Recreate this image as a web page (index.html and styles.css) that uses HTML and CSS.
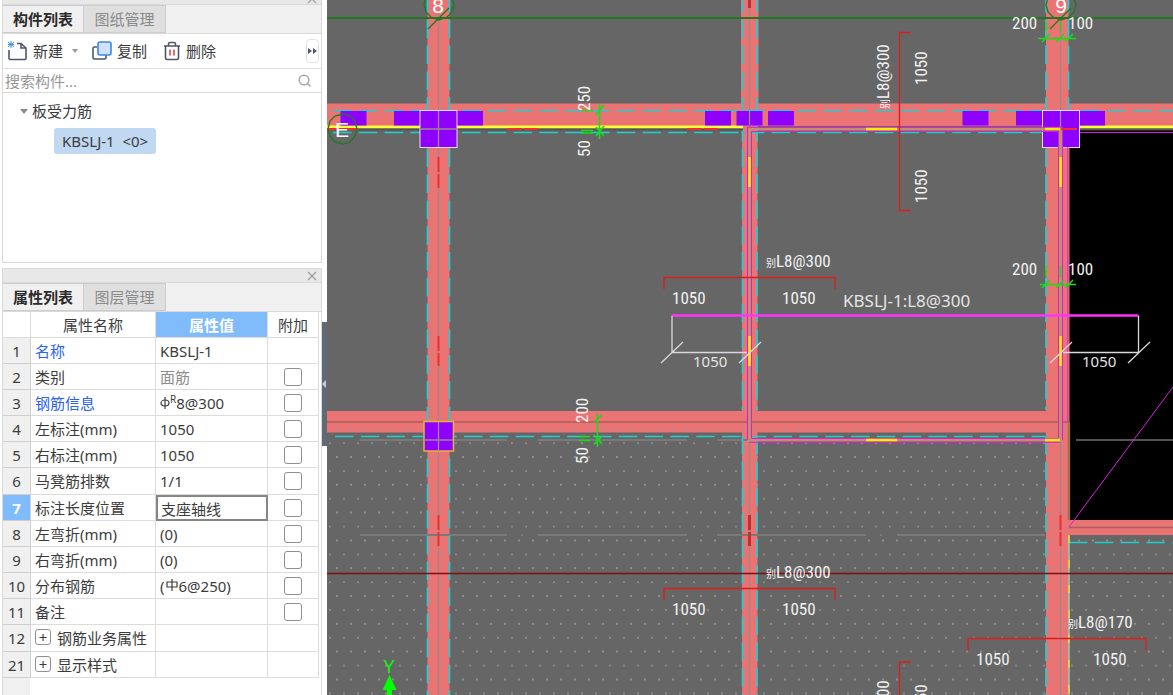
FILE: index.html
```html
<!DOCTYPE html>
<html lang="zh-CN">
<head>
    <meta charset="UTF-8">
    <meta name="viewport" content="width=device-width, initial-scale=1.0">
    <title>板受力筋</title>
    <link rel="stylesheet" href="styles.css">
</head>
<body>
    <div class="app">
        <aside class="sidebar">
            <section class="panel panel-list">
                <div class="panel-bar panel-bar-cut">
                    <button class="close" aria-label="关闭"><svg width="10" height="10" viewBox="0 0 10 10"><path d="M1 1l8 8M9 1l-8 8"/></svg></button>
                </div>
                <div class="tabs">
                    <button class="tab active">构件列表</button>
                    <button class="tab">图纸管理</button>
                </div>
                <div class="toolbar">
                    <button class="tool">
                        <svg width="20" height="20" viewBox="0 0 20 20">
                            <path class="ink" d="M1 9v8.500q0 1 1 1h15q1 0 1-1V7l-5-4.500H9M13 2.500V7h5"/>
                            <path class="blue" d="M0 1l6 5M6 1l-6 5M3 0v7M0 3.500h6"/>
                        </svg>
                        新建
                    </button>
                    <span class="caret"></span>
                    <button class="tool">
                        <svg width="20" height="20" viewBox="0 0 20 20">
                            <path class="ink" d="M5 6H2.500Q1 6 1 7.500v9Q1 18 2.500 18h10q1.500 0 1.500-1.500V14"/>
                            <rect class="sheet" x="6" y="1" width="13" height="13" rx="2"/>
                        </svg>
                        复制
                    </button>
                    <button class="tool">
                        <svg width="18" height="20" viewBox="0 0 18 20">
                            <path class="ink" d="M1 5h16M5.500 5V3q0-1.500 1.500-1.500h4q1.500 0 1.500 1.500v2M2.500 5v12q0 1.500 1.500 1.500h10q1.500 0 1.500-1.500V5"/>
                            <path class="red" d="M7 8.500v6M11 8.500v6"/>
                        </svg>
                        删除
                    </button>
                    <button class="more" aria-label="更多"><svg width="9" height="6" viewBox="0 0 9 6"><path d="M0 0l4 3-4 3zM5 0l4 3-4 3z"/></svg></button>
                </div>
                <label class="search">
                    <input type="text" placeholder="搜索构件..." aria-label="搜索构件">
                    <svg width="14" height="14" viewBox="0 0 14 14"><circle cx="6" cy="6" r="4.800"/><path d="M9.500 9.500l3 3"/></svg>
                </label>
                <div class="tree">
                    <div class="tree-node"><span class="caret caret-tree"></span>板受力筋</div>
                    <div class="tree-item">KBSLJ-1&nbsp; &lt;0&gt;</div>
                </div>
            </section>

            <section class="panel panel-props">
                <div class="panel-bar">
                    <button class="close" aria-label="关闭"><svg width="10" height="10" viewBox="0 0 10 10"><path d="M1 1l8 8M9 1l-8 8"/></svg></button>
                </div>
                <div class="tabs">
                    <button class="tab active">属性列表</button>
                    <button class="tab">图层管理</button>
                </div>
                <div class="table-wrap">
                    <table class="props">
                        <colgroup><col class="col-num"><col><col class="col-value"><col class="col-extra"></colgroup>
                        <thead>
                            <tr><th></th><th>属性名称</th><th class="current">属性值</th><th>附加</th></tr>
                        </thead>
                        <tbody>
                            <tr><th>1</th><td class="link">名称</td><td>KBSLJ-1</td><td></td></tr>
                            <tr><th>2</th><td>类别</td><td class="muted">面筋</td><td><input type="checkbox" aria-label="类别"></td></tr>
                            <tr><th>3</th><td class="link">钢筋信息</td><td><svg class="rebar" width="10" height="14" viewBox="0 0 10 14"><ellipse cx="5" cy="7" rx="4" ry="3"/><path d="M5 1v12"/></svg><sup>R</sup>8@300</td><td><input type="checkbox" aria-label="钢筋信息"></td></tr>
                            <tr><th>4</th><td>左标注(mm)</td><td>1050</td><td><input type="checkbox" aria-label="左标注"></td></tr>
                            <tr><th>5</th><td>右标注(mm)</td><td>1050</td><td><input type="checkbox" aria-label="右标注"></td></tr>
                            <tr><th>6</th><td>马凳筋排数</td><td>1/1</td><td><input type="checkbox" aria-label="马凳筋排数"></td></tr>
                            <tr><th class="current">7</th><td>标注长度位置</td><td class="editing"><input type="text" value="支座轴线" aria-label="标注长度位置"></td><td><input type="checkbox" aria-label="标注长度位置"></td></tr>
                            <tr><th>8</th><td>左弯折(mm)</td><td>(0)</td><td><input type="checkbox" aria-label="左弯折"></td></tr>
                            <tr><th>9</th><td>右弯折(mm)</td><td>(0)</td><td><input type="checkbox" aria-label="右弯折"></td></tr>
                            <tr><th>10</th><td>分布钢筋</td><td>(<svg class="rebar" width="14" height="14" viewBox="0 0 14 14"><path d="M2 3h10v5H2zM7 0v12"/></svg>6@250)</td><td><input type="checkbox" aria-label="分布钢筋"></td></tr>
                            <tr><th>11</th><td>备注</td><td></td><td><input type="checkbox" aria-label="备注"></td></tr>
                            <tr><th>12</th><td><button class="expand">+</button>钢筋业务属性</td><td></td><td></td></tr>
                            <tr><th>21</th><td><button class="expand">+</button>显示样式</td><td></td><td></td></tr>
                        </tbody>
                    </table>
                </div>
            </section>
        </aside>

        <div class="splitter"><button class="splitter-handle" aria-label="收起"></button></div>

        <main class="canvas">
            <svg class="drawing" viewBox="327 0 846 695" preserveAspectRatio="xMinYMin slice">
                <defs>
                    <pattern id="dots" x="329" y="456" width="14" height="27.800" patternUnits="userSpaceOnUse">
                        <path class="dot" d="M7 1h2M0 15h2"/>
                    </pattern>
                </defs>

                <!-- opening -->
                <rect x="1069" y="129" width="104" height="391"/>
                <path class="grey-dark" d="M1076 440H1173"/>

                <!-- beams -->
                <g class="beam">
                    <path d="M427.500 0h22v695h-22z"/>
                    <path d="M741 0h17.500v110h-1v585H742V110h-1z"/>
                    <path d="M1046 0h22.500v147h1v548H1046z"/>
                    <path d="M327 103.500h846V126H327z"/>
                    <path d="M327 411h742v21.500H327z"/>
                    <path d="M1069 520h104v15H1069z"/>
                </g>
                <path class="line-dark" d="M327 422h741.500V520M1069 527.500h104"/>
                <path fill="url(#dots)" d="M327 427h742v268H327zM1069 536h104v159H1069z"/>
                <path class="axis" d="M438.500 14V695M749.500 8V695M1060.500 14V695"/>
                <path class="grey" d="M360 535H507M521 535h2M538 535H687M701 535h2M717 535H866M880 535h2M897 535h148M360 440H507M538 440H687M717 440h30"/>

                <!-- hidden edges -->
                <g class="cyan">
                    <path d="M427.500 -6V695M449.500 -6V695M742.500 -6V410M757 -6V410M1046 -6V410M742.500 436V695M757 436V695M1046 436V695M1068.500 -6V110"/>
                    <path d="M333 110.500H1173M333 132.500H1046M335 436.500H1046M1069 542.500h104"/>
                </g>
                <path class="olive" d="M1069.500 422V520"/>
                <path class="cyan-mix" d="M1069 536V695"/>
                <path class="yellow-mix" d="M1069 535V695"/>

                <path class="green-dark" d="M327 18H1173"/>
                <path class="maroon" d="M327 573.500H1173"/>
                <path class="yellow" d="M327 127H743M1079 127h94"/>
                <path class="grey-dark" d="M327 129.500H743M1079 129.500h94"/>

                <!-- wall columns -->
                <g class="column">
                    <path d="M340.500 111h26v14.500h-26zM394 111h26v14.500h-26zM457 111h26v14.500h-26zM705 111h26v14.500h-26zM736.500 111h26v14.500h-26zM768 111h26v14.500h-26zM962.500 111h26v14.500h-26zM1016 111h26v14.500h-26zM1079 111h26v14.500h-26z"/>
                    <rect class="col-white" x="420" y="110.500" width="37" height="37"/>
                    <rect class="col-white" x="1042.500" y="110.500" width="37" height="37"/>
                    <rect class="col-gold" x="424" y="421.500" width="29.500" height="29.500"/>
                </g>
                <path class="axis" d="M420 129h37M438.500 111v36M424 440h29M438.500 422v29M749.500 111v14M1060.500 111v18"/>

                <!-- slab outline -->
                <path class="slab-fill" d="M749.500 129H1060.500V440H749.500z"/>
                <path class="slab-line" d="M747.500 440V127.300H1062.500V440M751.500 438.500V131.500H1058.500V438.500H751.500M749.500 442.300H1060"/>
                <path class="slab-line" d="M1067.800 147V422M1080 132.500h93"/>
                <path class="slab-line" d="M1069 527L1173 387"/>
                <path class="red-dash" d="M438.500 157v15M438.500 174v14M438.500 336v15M438.500 353v13M438.500 515v15M438.500 532v14M1060.500 515v15M1060.500 532v14M327 129h31M507 129h15M524 129h14M687 129h15M704 129h14M1061 129h16"/>
                <path class="red-deep" d="M749.500 0v8M749.500 515v15M749.500 532v14"/>
                <path class="yellow-dash" d="M749.500 157v30M749.500 336v30M1060.500 157v30M1060.500 336v30M866 129h31M1045 129h15M866 440h31M1045 440h15"/>

                <!-- rebar -->
                <path class="rebar-main" d="M671.500 315.500H1138.500"/>
                <path class="leader" d="M672 316V352.500H747M661 363l22-21M739 363l22-21M1138.500 316V352.500H1063M1128 363l22-21M1050 363l22-21"/>
                <path class="red-dim" d="M664 289V277.500H835V289M664 600V588.500H835V600M968 650V638.500H1146V650M911 32.500H899.500V210.500H911M911 662H899.500V695"/>

                <!-- green dimensions -->
                <path class="green-dim" d="M599.500 104v35M596 115l8-10M596 136l8-10M596 127l8 9M581 110.500h12M581 130.500h12M581 133h12M597.500 414v33M594 422l8-7M594 444l8-8M594 435l8 9M579 436.500h11M579 440.500h11"/>
                <path class="green-dim" d="M1038 38.500h38M1042 42l8-8M1056 42l8-8M1065 42l8-8M1040 284.500h36M1042 288l8-8M1056 288l8-8M1065 288l8-8M1060.500 22v9M1046 22v9M1060.500 266v11M1046 266v11"/>

                <!-- axis heads -->
                <g class="bubble">
                    <path d="M424 5l2-8 6-6 7-2 8 2 5 6 2 8-2 7-5 5-8 3-8-3-5-5zM428 29l21-21"/>
                    <path d="M1046 5l2-8 6-6 7-2 8 2 5 6 2 8-2 7-5 5-8 3-8-3-5-5zM1050 29l21-21"/>
                    <path d="M328 129l2-8 5-5 8-2 7 2 5 5 2 8-2 7-5 6-7 2-8-2-5-6z"/>
                </g>
                <g class="bubble-text">
                    <text x="438" y="13">8</text>
                    <text x="1061" y="13">9</text>
                    <text x="342" y="137">E</text>
                </g>

                <g class="cad">
                    <text x="766" y="267"><tspan class="mark">别</tspan>L8@300</text>
                    <text x="672" y="304">1050</text>
                    <text x="782" y="304">1050</text>
                    <text x="766" y="578"><tspan class="mark">别</tspan>L8@300</text>
                    <text x="672" y="615">1050</text>
                    <text x="782" y="615">1050</text>
                    <text x="1068" y="628"><tspan class="mark">别</tspan>L8@170</text>
                    <text x="976" y="665">1050</text>
                    <text x="1093" y="665">1050</text>
                    <text x="1012" y="29">200</text>
                    <text x="1068" y="29">100</text>
                    <text x="1012" y="275">200</text>
                    <text x="1068" y="275">100</text>
                    <text transform="translate(590 111) rotate(-90)">250</text>
                    <text transform="translate(590 157) rotate(-90)">50</text>
                    <text transform="translate(588 423) rotate(-90)">200</text>
                    <text transform="translate(588 464) rotate(-90)">50</text>
                    <text transform="translate(889 109) rotate(-90)"><tspan class="mark">别</tspan>L8@300</text>
                    <text transform="translate(927 85) rotate(-90)">1050</text>
                    <text transform="translate(927 203) rotate(-90)">1050</text>
                    <text transform="translate(889 745) rotate(-90)"><tspan class="mark">别</tspan>L8@300</text>
                    <text transform="translate(927 718) rotate(-90)">1050</text>
                </g>
                <g class="note">
                    <text x="843" y="307">KBSLJ-1:L8@300</text>
                    <text class="note-dim" x="693" y="367">1050</text>
                    <text class="note-dim" x="1082" y="367">1050</text>
                </g>

                <g class="ucs">
                    <text x="389" y="673">Y</text>
                    <path d="M389.500 675l7 15h-4.500v5h-5v-5h-4.500z"/>
                </g>
            </svg>
        </main>
    </div>
</body>
</html>
```

FILE: styles.css
```css
* {
    box-sizing: border-box;
}
body {
    margin: 0;
    font-family: "Noto Sans", "Noto Sans CJK SC", sans-serif;
    font-size: 15px;
    line-height: 20px;
    color: #3c3c3c;
    background-color: #fff;
}
button, input {
    font: inherit;
    color: inherit;
    background: none;
    border: 0;
    padding: 0;
    margin: 0;
}
svg {
    flex: none;
}
.app {
    display: flex;
    height: 100vh;
    overflow: hidden;
}

/* sidebar */
.sidebar {
    width: 322px;
    flex: none;
    padding-left: 2px;
    display: flex;
    flex-direction: column;
    gap: 5px;
}
.panel {
    border: 1px solid #d9d9d9;
    display: flex;
    flex-direction: column;
}
.panel-list {
    height: 263px;
    flex: none;
    border-top: 0;
}
.panel-props {
    flex: 1;
    min-height: 0;
    border-bottom: 0;
}
.panel-bar {
    height: 14px;
    flex: none;
    background-color: #e8e8e8;
    border-bottom: 1px solid #d9d9d9;
    display: flex;
    justify-content: flex-end;
    align-items: center;
    padding-right: 4px;
    overflow: hidden;
}
.panel-bar-cut {
    height: 5px;
    align-items: flex-end;
}
.close {
    display: flex;
}
.close svg {
    fill: none;
    stroke: #a0a0a0;
    stroke-width: 1.3;
}
.tabs {
    display: flex;
    height: 29px;
    flex: none;
    background-color: #f0f0f0;
    border-bottom: 1px solid #d9d9d9;
}
.tab {
    width: 82px;
    background-color: #dfdfdf;
    border: 1px solid #cbcdd0;
    border-left: 0;
    color: #8a8a8a;
}
.tab.active {
    width: 81px;
    background-color: #f0f0f0;
    color: #2b2b2b;
    font-weight: bold;
}
.toolbar {
    display: flex;
    align-items: center;
    height: 35px;
    padding: 0 2px 0 5px;
    border-bottom: 1px solid #e2e2e2;
}
.tool {
    display: flex;
    align-items: center;
    gap: 5px;
}
.tool + .tool {
    margin-left: 16px;
}
.tool svg {
    fill: none;
}
.ink {
    stroke: #4f566b;
    stroke-width: 1.6;
}
.blue {
    stroke: #3d8bf0;
    stroke-width: 1;
}
.sheet {
    fill: #cfe2fb;
    stroke: #3b86e8;
    stroke-width: 1.6;
}
.red {
    stroke: #e04a4a;
    stroke-width: 1.6;
}
.caret {
    border: 3px solid transparent;
    border-top: 4px solid #9a9a9a;
    border-bottom: 0;
    margin: 0 14px 0 9px;
}
.caret-tree {
    border-width: 5px 4px 0;
    border-top-color: #8a8a8a;
    margin: 0 4px 0 0;
}
.more {
    margin-left: auto;
    width: 13px;
    height: 24px;
    border: 1px solid #e2e2e2;
    border-radius: 4px;
    display: flex;
    align-items: center;
    justify-content: center;
}
.more svg {
    fill: #4f566b;
}
.search {
    display: flex;
    align-items: center;
    height: 24px;
    padding: 0 9px 0 2px;
    border-bottom: 1px solid #d9d9d9;
}
.search input {
    flex: 1;
    min-width: 0;
    outline: 0;
}
.search input::placeholder {
    color: #979797;
    opacity: 1;
}
.search svg {
    fill: none;
    stroke: #a8a8a8;
    stroke-width: 1.5;
}
.tree {
    padding: 8px 0 0 17px;
}
.tree-node {
    display: flex;
    align-items: center;
}
.tree-item {
    display: inline-block;
    margin: 7px 0 0 34px;
    padding: 3px 8px;
    border-radius: 3px;
    background-color: #c0d8f2;
}

/* property table, the number gutter runs to the bottom */
.table-wrap {
    flex: 1;
    min-height: 0;
    overflow: hidden;
    background: linear-gradient(#f0f0f0, #f0f0f0) 0 0 / 27px 100% no-repeat;
}
.props {
    width: calc(100% - 2px);
    table-layout: fixed;
    border-collapse: separate;
    border-spacing: 0;
}
.col-num {
    width: 28px;
}
.col-value {
    width: 112px;
}
.col-extra {
    width: 51px;
}
.props th,
.props td {
    height: 26px;
    padding: 0 4px;
    border-right: 1px solid #dcdcdc;
    border-bottom: 1px solid #dcdcdc;
    font-weight: normal;
    text-align: left;
    white-space: nowrap;
}
.props thead th {
    padding: 0;
    text-align: center;
    background-color: #fff;
}
.props tbody th {
    padding: 0;
    text-align: center;
    background-color: #f0f0f0;
    border-color: #cfcfcf;
}
.props tbody tr:nth-child(6n) th,
.props tbody tr:nth-child(6n) td {
    height: 27px;
}
.props thead .current,
.props tbody .current {
    background-color: #80bbfb;
    color: #fff;
    font-weight: bold;
}
.props td:last-child {
    padding: 0;
    text-align: center;
}
.props .link {
    color: #2962f5;
}
.props .muted {
    color: #8c8c8c;
}
.props .editing {
    padding: 0;
    border: 2px solid #868686;
}
.editing input {
    display: block;
    width: 100%;
    height: 22px;
    padding: 0 3px;
    outline: 0;
}
.props input[type="checkbox"] {
    appearance: none;
    display: block;
    width: 18px;
    height: 18px;
    margin: 0 auto;
    border: 1px solid #8f8f8f;
    border-radius: 3px;
    background-color: #fff;
}
.props sup {
    font-size: 10px;
    line-height: 0;
}
.rebar {
    fill: none;
    stroke: #3c3c3c;
    stroke-width: 1.2;
    vertical-align: -1px;
}
.expand {
    width: 16px;
    height: 16px;
    margin-right: 6px;
    border: 1px solid #8f8f8f;
    border-radius: 3px;
    line-height: 12px;
    vertical-align: 1px;
}

/* splitter */
.splitter {
    width: 5px;
    flex: none;
    display: flex;
    flex-direction: column;
    justify-content: center;
    padding-top: 72px;
}
.splitter-handle {
    height: 124px;
    background-color: #5f6977;
    display: flex;
    align-items: center;
}
.splitter-handle::before {
    content: "";
    border: 4px solid transparent;
    border-right-color: #c9ced6;
    border-left: 0;
}

/* drawing */
.canvas {
    flex: 1;
    min-width: 0;
    background-color: #666;
}
.drawing {
    display: block;
    width: 100%;
    height: 100%;
}
.drawing path {
    stroke-width: 1.3;
}
.dot {
    stroke: #989c9d;
}
.beam {
    fill: #ea7373;
}
.line-dark {
    fill: none;
    stroke: #a85f5f;
}
.axis {
    stroke: #a18686;
}
.drawing .grey {
    stroke: #7a7a7a;
    stroke-width: 2;
}
.drawing .grey-dark {
    stroke: #555;
    stroke-width: 2;
}
.drawing .cyan path {
    stroke: #22cdd0;
    stroke-width: 1.7;
    stroke-dasharray: 18.5 7.3;
}
.olive {
    stroke: #8f8440;
}
.cyan-mix {
    stroke: #7fe0b0;
}
.yellow-mix {
    stroke: #e8e03c;
    stroke-dasharray: 8 17;
}
.drawing .green-dark {
    stroke: #217821;
    stroke-width: 2;
}
.maroon {
    stroke: #7a1010;
}
.drawing .yellow {
    stroke: #ffff33;
    stroke-width: 3;
}
.column {
    fill: #8f00ff;
}
.col-white {
    stroke: #ecdcfa;
}
.col-gold {
    stroke: #e3b637;
    stroke-width: 1.5;
}
.drawing .slab-fill {
    fill: none;
    stroke: #c19068;
    stroke-width: 3;
}
.drawing .slab-line {
    fill: none;
    stroke: #dc1cdc;
    stroke-width: 1;
}
.drawing .red-dash {
    stroke: #f03030;
    stroke-width: 2;
}
.drawing .red-deep {
    stroke: #b83232;
    stroke-width: 3;
}
.drawing .yellow-dash {
    stroke: #ffee00;
    stroke-width: 2.5;
}
.drawing .rebar-main {
    stroke: #ff33ff;
    stroke-width: 2.5;
}
.leader {
    fill: none;
    stroke: #d9d9d9;
}
.red-dim {
    fill: none;
    stroke: #dd1c1c;
}
.drawing .green-dim {
    stroke: #14e014;
    stroke-width: 1.5;
}
.bubble {
    fill: none;
    stroke: #1f7a1f;
}
.bubble-text {
    font-family: "Liberation Sans", sans-serif;
    font-size: 21px;
    fill: #fff;
    text-anchor: middle;
}
.cad {
    font-family: "Liberation Sans Narrow", "Roboto Condensed", "Liberation Sans", "Noto Sans CJK SC", sans-serif;
    font-size: 17px;
    fill: #f2f2f2;
}
.mark {
    font-size: 10px;
}
.note {
    font-size: 17px;
    fill: #e4e4e4;
}
.note-dim {
    font-size: 15px;
}
.ucs {
    font-family: "Liberation Sans", sans-serif;
    font-size: 18px;
    fill: #00ff00;
    text-anchor: middle;
}
```
